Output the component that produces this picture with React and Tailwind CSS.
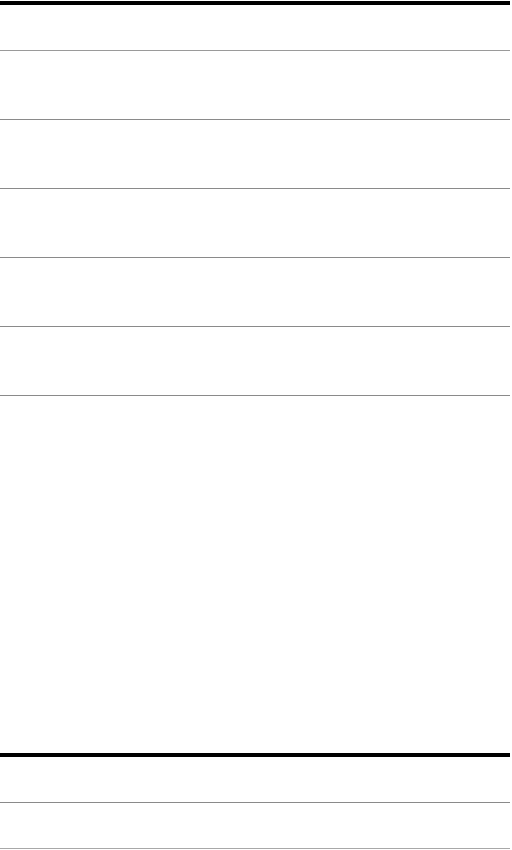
export default function App() {
  const rows = [1, 2, 3, 4, 5]
  return (
    <div className="w-[510px] bg-white font-['Liberation_Sans',sans-serif]">
      <div className="pt-px">
        <div className="h-1 bg-black" />
        <div className="h-[46px] border-b border-[#9a9a9a]" />
        {rows.map(r => (
          <div key={r} className="h-[69px] border-b border-[#8a8a8a]" />
        ))}
      </div>
      <div className="h-[357px]" />
      <div>
        <div className="h-1 bg-black" />
        <div className="h-[46px] border-b border-[#8a8a8a]" />
        <div className="h-[46px] border-b border-[#a8a8a8]" />
      </div>
    </div>
  )
}
